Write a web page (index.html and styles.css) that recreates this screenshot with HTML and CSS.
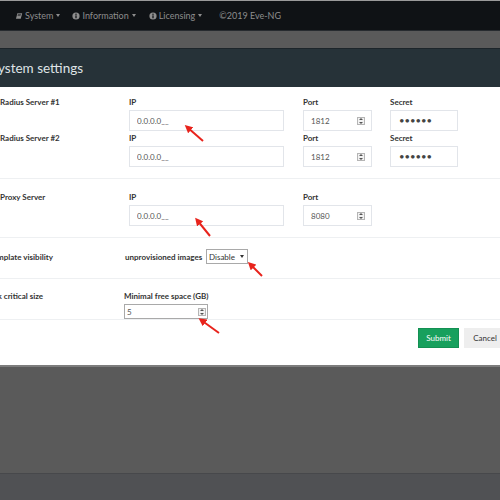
FILE: index.html
```html
<!DOCTYPE html>
<html lang="en">
<head>
    <meta charset="UTF-8">
    <title>System settings</title>
    <link rel="stylesheet" href="styles.css">
</head>
<body>

<div class="topline"></div>
<nav class="navbar">
    <a class="nav-item nav-system">
        <svg class="nav-icon" viewBox="0 0 10 10"><path d="M3 1.5 H9 L7.2 8.5 H1.2 Z" fill="#8d8d8d"/><path d="M3.6 3 H7.4 M3.2 4.5 H7" stroke="#0f1215" stroke-width="0.8"/></svg>
        System <span class="caret"></span>
    </a>
    <a class="nav-item nav-info">
        <svg class="nav-icon" viewBox="0 0 10 10"><circle cx="5" cy="5" r="4.5" fill="#8d8d8d"/><rect x="4.2" y="4.2" width="1.6" height="3.6" fill="#0f1215"/><circle cx="5" cy="2.9" r="0.9" fill="#0f1215"/></svg>
        Information <span class="caret"></span>
    </a>
    <a class="nav-item nav-lic">
        <svg class="nav-icon" viewBox="0 0 10 10"><circle cx="5" cy="5" r="4.5" fill="#8d8d8d"/><rect x="4.2" y="4.2" width="1.6" height="3.6" fill="#0f1215"/><circle cx="5" cy="2.9" r="0.9" fill="#0f1215"/></svg>
        Licensing <span class="caret"></span>
    </a>
    <span class="nav-copy">©2019 Eve-NG</span>
</nav>
<div class="band"></div>

<div class="panel">
    <div class="panel-heading">System settings</div>
    <form class="panel-body">
        <div class="group group-radius">
            <div class="row">
                <div class="name">Radius Server #1</div>
                <div class="field field-ip">
                    <label>IP</label>
                    <input type="text" value="0.0.0.0__">
                </div>
                <div class="field field-port">
                    <label>Port</label>
                    <div class="num-box"><input type="text" value="1812"><span class="spin"></span></div>
                </div>
                <div class="field field-secret">
                    <label>Secret</label>
                    <input type="password" value="secret">
                </div>
            </div>
            <div class="row row-second">
                <div class="name">Radius Server #2</div>
                <div class="field field-ip">
                    <label>IP</label>
                    <input type="text" value="0.0.0.0__">
                </div>
                <div class="field field-port">
                    <label>Port</label>
                    <div class="num-box"><input type="text" value="1812"><span class="spin"></span></div>
                </div>
                <div class="field field-secret">
                    <label>Secret</label>
                    <input type="password" value="secret">
                </div>
            </div>
        </div>

        <div class="group group-proxy">
            <div class="row">
                <div class="name">Proxy Server</div>
                <div class="field field-ip">
                    <label>IP</label>
                    <input type="text" value="0.0.0.0__">
                </div>
                <div class="field field-port">
                    <label>Port</label>
                    <div class="num-box"><input type="text" value="8080"><span class="spin"></span></div>
                </div>
            </div>
        </div>

        <div class="group group-template">
            <div class="row row-inline">
                <div class="name name-cut">Template visibility</div>
                <label class="inline-label">unprovisioned images</label>
                <div class="select-box">
                    <select><option>Disable</option><option>Enable</option></select>
                    <span class="select-arrow"></span>
                </div>
            </div>
        </div>

        <div class="group group-disk">
            <div class="row">
                <div class="name name-cut name-short">Disk critical size</div>
                <div class="field field-disk">
                    <label>Minimal free space (GB)</label>
                    <div class="num-box num-small"><input type="text" value="5"><span class="spin"></span></div>
                </div>
            </div>
        </div>

        <div class="actions">
            <button type="button" class="btn btn-submit">Submit</button>
            <button type="button" class="btn btn-cancel">Cancel</button>
        </div>
    </form>
</div>

<div class="footer"></div>

<svg class="marks" viewBox="0 0 500 500">
    <defs>
        <marker id="head" markerWidth="4" markerHeight="4" refX="2.5" refY="2" orient="auto">
            <path d="M0,0 L4,2 L0,4 Z" fill="#e8231c"/>
        </marker>
    </defs>
    <line x1="203" y1="141" x2="187" y2="127" marker-end="url(#head)"/>
    <line x1="210" y1="236" x2="197" y2="220" marker-end="url(#head)"/>
    <line x1="262" y1="276" x2="250" y2="264" marker-end="url(#head)"/>
    <line x1="219" y1="333" x2="201" y2="320" marker-end="url(#head)"/>
</svg>

</body>
</html>
```

FILE: styles.css
```css
body {
    margin: 0;
    width: 500px;
    height: 500px;
    overflow: hidden;
    position: relative;
    background: #5a5a5a;
    font-family: Lato, "Noto Sans", sans-serif;
    color: #333;
}
.topline {
    height: 1px;
    background: #9a9a9a;
}
.navbar {
    height: 29px;
    background: #0f1215;
    border-bottom: 1px solid #272b2f;
    display: flex;
    align-items: center;
    padding-left: 15px;
    font-size: 9px;
    color: #8d8d8d;
}
.nav-item {
    display: flex;
    align-items: center;
}
.nav-system {
    margin-right: 12px;
}
.nav-info {
    margin-right: 13px;
}
.nav-lic {
    margin-right: 17px;
}
.nav-icon {
    width: 8px;
    height: 8px;
    margin-right: 2px;
}
.caret {
    width: 0;
    height: 0;
    margin-left: 3px;
    border-left: 2.5px solid transparent;
    border-right: 2.5px solid transparent;
    border-top: 3px solid #8d8d8d;
}
.band {
    height: 17px;
    background: #5a5a5a;
}
.panel-heading {
    height: 38px;
    background: #263238;
    border-top: 1px solid #1d252a;
    display: flex;
    align-items: center;
    text-indent: -9px;
    font-size: 13.5px;
    color: #dfe4e6;
}
.panel-body {
    margin: 0;
    height: 278px;
    background: #fff;
    border-bottom: 2px solid #7d7d7d;
}
.group {
    border-bottom: 1px solid #eef0f2;
}
.group-radius {
    padding: 10px 0 11px;
}
.group-proxy {
    padding: 13px 0 11px;
}
.group-template {
    padding: 11px 0 14px;
}
.group-disk {
    padding: 12px 0 0;
}
.row {
    display: flex;
    align-items: flex-start;
}
.row-second {
    margin-top: 2px;
}
.row-inline {
    align-items: center;
    height: 15px;
}
.name {
    width: 129px;
    flex-shrink: 0;
    font-size: 8px;
    font-weight: bold;
    line-height: 10px;
}
.name-cut {
    width: 136px;
    margin-left: -11px;
}
.name-short {
    width: 138px;
    margin-left: -14px;
}
.field label,
.inline-label {
    display: block;
    font-size: 8px;
    font-weight: bold;
    line-height: 10px;
    margin-bottom: 3px;
}
.inline-label {
    width: 81px;
    margin: 0;
    white-space: nowrap;
}
.field input,
.num-box {
    display: block;
    box-sizing: border-box;
    height: 21px;
    border: 1px solid #e2e5ea;
    background: #fff;
    font-family: inherit;
    font-size: 8px;
    color: #555;
}
.field > input {
    width: 100%;
    padding: 0 7px;
}
.field-ip {
    width: 155px;
    margin-right: 19px;
}
.field-port {
    width: 69px;
    margin-right: 18px;
}
.field-secret {
    width: 68px;
}
.field-secret input {
    padding: 0 8px;
    font-size: 9.5px;
    color: #444;
}
.num-box {
    display: flex;
    align-items: center;
    padding: 0 6px 0 7px;
}
.num-box input {
    flex: 1;
    min-width: 0;
    height: auto;
    border: none;
    padding: 0;
    outline: none;
}
.spin {
    position: relative;
    width: 8px;
    height: 8px;
    box-sizing: border-box;
    border: 1px solid #b5b5b5;
    background: #f2f2f2;
}
.spin::before,
.spin::after {
    content: "";
    position: absolute;
    left: 1px;
    border-left: 2px solid transparent;
    border-right: 2px solid transparent;
}
.spin::before {
    top: 0;
    border-bottom: 2px solid #555;
}
.spin::after {
    bottom: 0;
    border-top: 2px solid #555;
}
.field-disk {
    width: 84px;
}
.field-disk label {
    white-space: nowrap;
}
.num-small {
    height: 15px;
    border-color: #a9a9a9;
    padding: 0 1px 0 2px;
}
.select-box {
    box-sizing: border-box;
    display: flex;
    align-items: center;
    width: 42px;
    height: 15px;
    border: 1px solid #a9a9a9;
    padding: 0 3px 0 2px;
}
.select-box select {
    flex: 1;
    min-width: 0;
    border: none;
    padding: 0;
    appearance: none;
    background: transparent;
    font-family: inherit;
    font-size: 8px;
    color: #333;
}
.select-arrow {
    width: 0;
    height: 0;
    border-left: 2.5px solid transparent;
    border-right: 2.5px solid transparent;
    border-top: 3px solid #333;
}
.actions {
    display: flex;
    gap: 5px;
    padding: 8px 0 0 418px;
}
.btn {
    flex-shrink: 0;
    box-sizing: border-box;
    height: 20px;
    border: 1px solid transparent;
    font-family: inherit;
    font-size: 8px;
    padding: 0;
}
.btn-submit {
    width: 41px;
    background: #17a05d;
    border-color: #139052;
    color: #fff;
}
.btn-cancel {
    width: 42px;
    background: #eeeeee;
    color: #333;
}
.footer {
    position: absolute;
    left: 0;
    right: 0;
    bottom: 0;
    height: 26px;
    background: #505154;
    border-top: 1px solid #47484b;
}
.marks {
    position: absolute;
    top: 0;
    left: 0;
    width: 500px;
    height: 500px;
    pointer-events: none;
}
.marks line {
    stroke: #e8231c;
    stroke-width: 2;
}
```
